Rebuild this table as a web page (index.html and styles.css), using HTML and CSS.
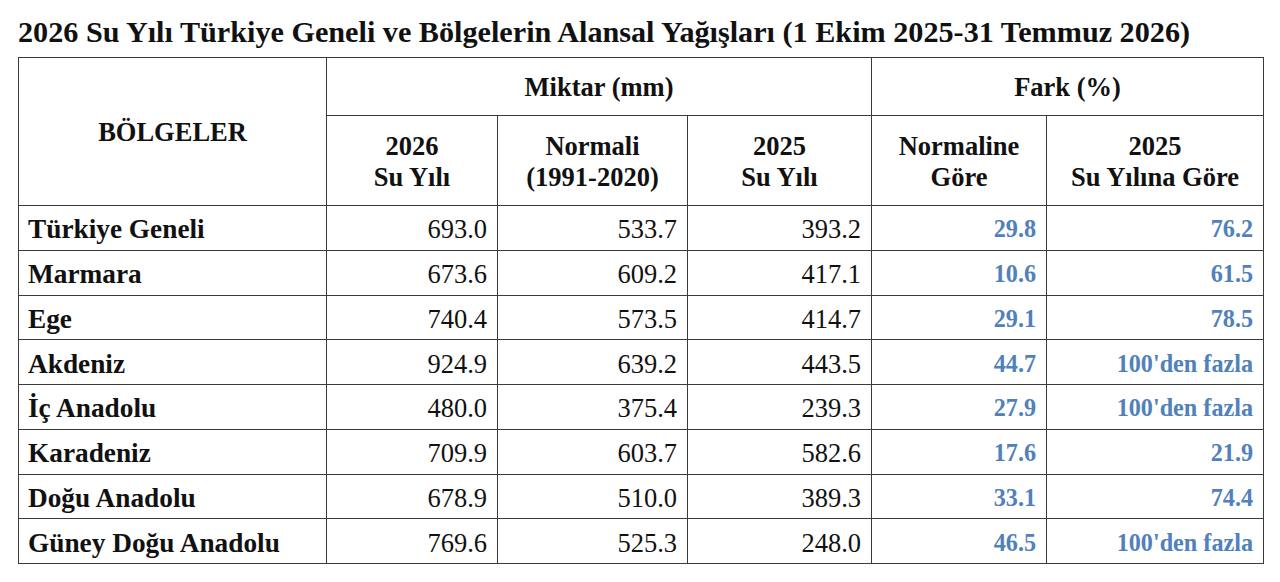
FILE: index.html
```html
<!DOCTYPE html>
<html lang="tr">
<head>
<meta charset="utf-8">
<title>2026 Su Yılı Alansal Yağışlar</title>
<link rel="stylesheet" href="styles.css">
</head>
<body>
<div class="page">
  <h1 class="title">2026 Su Yılı Türkiye Geneli ve Bölgelerin Alansal Yağışları (1 Ekim 2025-31 Temmuz 2026)</h1>
  <table class="data">
    <colgroup>
      <col class="c1"><col class="c2"><col class="c3"><col class="c4"><col class="c5"><col class="c6">
    </colgroup>
    <thead>
      <tr class="h1row">
        <th rowspan="2" class="region-head">BÖLGELER</th>
        <th colspan="3">Miktar (mm)</th>
        <th colspan="2">Fark (%)</th>
      </tr>
      <tr class="h2row">
        <th>2026<br>Su Yılı</th>
        <th>Normali<br>(1991-2020)</th>
        <th>2025<br>Su Yılı</th>
        <th>Normaline<br>Göre</th>
        <th>2025<br>Su Yılına Göre</th>
      </tr>
    </thead>
    <tbody>
      <tr><td class="name">Türkiye Geneli</td><td>693.0</td><td>533.7</td><td>393.2</td><td class="diff">29.8</td><td class="diff">76.2</td></tr>
      <tr><td class="name">Marmara</td><td>673.6</td><td>609.2</td><td>417.1</td><td class="diff">10.6</td><td class="diff">61.5</td></tr>
      <tr><td class="name">Ege</td><td>740.4</td><td>573.5</td><td>414.7</td><td class="diff">29.1</td><td class="diff">78.5</td></tr>
      <tr><td class="name">Akdeniz</td><td>924.9</td><td>639.2</td><td>443.5</td><td class="diff">44.7</td><td class="diff">100'den fazla</td></tr>
      <tr><td class="name">İç Anadolu</td><td>480.0</td><td>375.4</td><td>239.3</td><td class="diff">27.9</td><td class="diff">100'den fazla</td></tr>
      <tr><td class="name">Karadeniz</td><td>709.9</td><td>603.7</td><td>582.6</td><td class="diff">17.6</td><td class="diff">21.9</td></tr>
      <tr><td class="name">Doğu Anadolu</td><td>678.9</td><td>510.0</td><td>389.3</td><td class="diff">33.1</td><td class="diff">74.4</td></tr>
      <tr><td class="name">Güney Doğu Anadolu</td><td>769.6</td><td>525.3</td><td>248.0</td><td class="diff">46.5</td><td class="diff">100'den fazla</td></tr>
    </tbody>
  </table>
</div>
</body>
</html>
```
FILE: styles.css
```css
html, body {
  margin: 0;
  padding: 0;
  background: #ffffff;
}
body {
  font-family: "Liberation Serif", "Times New Roman", serif;
  color: #111111;
}
.page {
  padding: 16px 0 0 18px;
}
.title {
  margin: 0 0 8px 0;
  font-size: 30.2px;
  line-height: 33px;
  font-weight: bold;
  color: #111;
  white-space: nowrap;
}
.data {
  border-collapse: collapse;
  width: 1245px;
  table-layout: fixed;
  font-size: 26.5px;
}
.c1 { width: 308px; }
.c2 { width: 171px; }
.c3 { width: 190px; }
.c4 { width: 184px; }
.c5 { width: 175px; }
.c6 { width: 217px; }
.data th, .data td {
  border: 1px solid #3a3a3a;
  padding: 0 10px;
}
.data th {
  font-weight: bold;
  text-align: center;
  line-height: 31px;
}
.h1row th { height: 55px; padding-top: 2px; }
.h2row th { height: 86px; padding-top: 3px; }
.region-head { padding-bottom: 12px; }
.data td {
  height: 40.75px;
  text-align: right;
  line-height: 26px;
  padding-top: 3px;
}
.data td.name {
  text-align: left;
  font-weight: bold;
  font-size: 27.3px;
  padding-left: 9px;
}
.data td.diff {
  color: #5081bb;
  font-weight: bold;
  font-size: 24.2px;
}
```
